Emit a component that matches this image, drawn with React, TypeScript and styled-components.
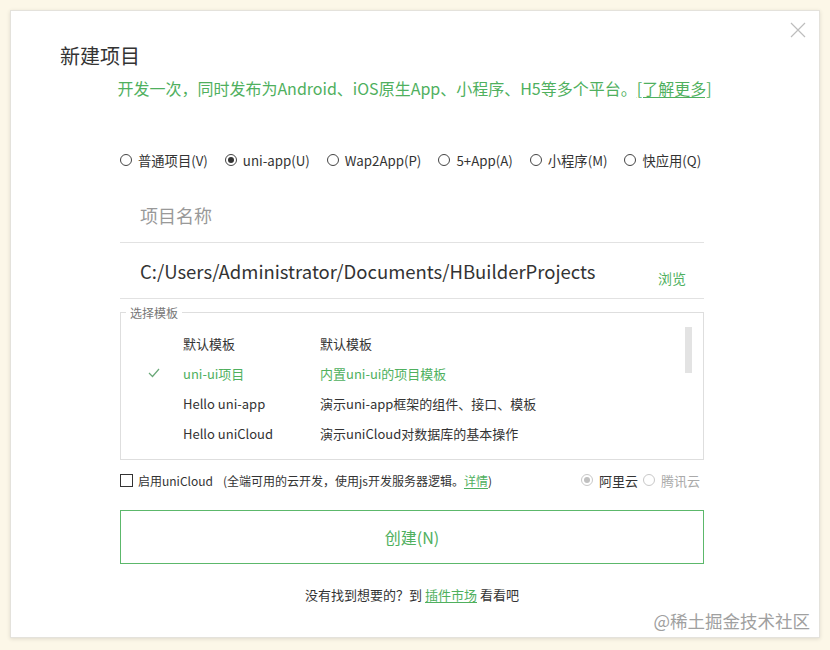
import React from 'react';
import styled, { createGlobalStyle } from 'styled-components';

const GlobalStyle = createGlobalStyle`
  html, body {
    margin: 0;
    padding: 0;
    background: #fcf7e8;
  }
  body {
    font-family: 'Noto Sans CJK SC', 'Noto Sans', sans-serif;
    color: #333;
  }
`;

const GREEN = '#4fb05e';

const Page = styled.div`
  width: 830px;
  height: 650px;
  padding: 10px;
  box-sizing: border-box;
`;

const Dialog = styled.div`
  position: relative;
  width: 810px;
  height: 628px;
  box-sizing: border-box;
  background: #fff;
  border: 1px solid #e4e2dc;
  box-shadow: 0 1px 4px rgba(0, 0, 0, 0.12);
  padding: 31px 115px 0 109px;
`;

const CloseButton = styled.button`
  position: absolute;
  top: 9px;
  right: 11px;
  width: 20px;
  height: 20px;
  padding: 0;
  border: none;
  background: none;
`;

const Title = styled.h1`
  margin: 0 0 0 -60px;
  font-size: 20px;
  line-height: 28px;
  font-weight: 400;
  color: #333;
`;

const Subtitle = styled.p`
  margin: 6px -33px 0 -28px;
  text-align: center;
  white-space: nowrap;
  font-size: 16px;
  line-height: 24px;
  color: ${GREEN};
`;

const Link = styled.a`
  color: ${GREEN};
  text-decoration: underline;
  text-underline-offset: 2px;
`;

const TypeRow = styled.div`
  display: flex;
  align-items: center;
  gap: 17px;
  margin-top: 48px;
  height: 24px;
  font-size: 13.3px;
`;

const Option = styled.label<{ $muted?: boolean }>`
  display: flex;
  align-items: center;
  gap: 6px;
  color: ${(p) => (p.$muted ? '#aaa' : '#333')};
  white-space: nowrap;
`;

const Radio = styled.span<{ $checked?: boolean; $disabled?: boolean }>`
  position: relative;
  width: 12px;
  height: 12px;
  box-sizing: border-box;
  border-radius: 50%;
  border: 1px solid ${(p) => (p.$disabled ? '#c8c8c8' : '#444')};
  &::after {
    content: '';
    display: ${(p) => (p.$checked ? 'block' : 'none')};
    position: absolute;
    left: 2px;
    top: 2px;
    width: 6px;
    height: 6px;
    border-radius: 50%;
    background: ${(p) => (p.$disabled ? '#c0c0c0' : '#333')};
  }
`;

const Field = styled.div`
  display: flex;
  align-items: center;
  justify-content: space-between;
  height: 56px;
  box-sizing: border-box;
  padding: 0 18px 0 20px;
  border-bottom: 1px solid #e2e2e2;
`;

const NameField = styled(Field)`
  margin-top: 15px;
`;

const FieldText = styled.span<{ $placeholder?: boolean }>`
  font-size: ${(p) => (p.$placeholder ? '18px' : '18.5px')};
  color: ${(p) => (p.$placeholder ? '#999' : '#333')};
`;

const Browse = styled.span`
  align-self: flex-end;
  margin-bottom: 10px;
  font-size: 14px;
  color: ${GREEN};
`;

const TemplateBox = styled.div`
  position: relative;
  margin-top: 13px;
  height: 148px;
  box-sizing: border-box;
  border: 1px solid #dedede;
  padding-top: 15px;
`;

const Legend = styled.span`
  position: absolute;
  top: -8px;
  left: 5px;
  padding: 0 4px;
  background: #fff;
  font-size: 12px;
  line-height: 16px;
  color: #777;
`;

const Scrollbar = styled.div`
  position: absolute;
  top: 14px;
  right: 11px;
  width: 7px;
  height: 46px;
  background: #e3e3e3;
`;

const TemplateRow = styled.div<{ $active?: boolean }>`
  display: grid;
  grid-template-columns: 62px 137px 1fr;
  align-items: center;
  height: 30px;
  font-size: 13px;
  color: ${(p) => (p.$active ? GREEN : '#333')};
`;

const Check = styled.span`
  display: flex;
  justify-content: center;
  padding-left: 4px;
`;

const CloudRow = styled.div`
  display: flex;
  align-items: center;
  margin-top: 10px;
  height: 20px;
  font-size: 12px;
`;

const Checkbox = styled.span`
  width: 13px;
  height: 13px;
  box-sizing: border-box;
  border: 1px solid #333;
  margin-right: 5px;
`;

const Note = styled.span`
  margin-left: 10px;
  color: #333;
`;

const Providers = styled.div`
  display: flex;
  align-items: center;
  gap: 5px;
  margin-left: auto;
  margin-right: 4px;
  font-size: 13px;
`;

const CreateButton = styled.button`
  display: block;
  width: 100%;
  height: 54px;
  margin-top: 20px;
  border: 1px solid #5cb86b;
  background: #fff;
  font-family: inherit;
  font-size: 16px;
  color: ${GREEN};
`;

const Footer = styled.p`
  margin: 21px 0 0;
  text-align: center;
  font-size: 13px;
  line-height: 20px;
  color: #333;
`;

const Watermark = styled.span`
  position: absolute;
  right: 9px;
  bottom: 4px;
  font-size: 17.5px;
  color: #a0a0a0;
`;

const types = [
  { label: '普通项目(V)' },
  { label: 'uni-app(U)', checked: true },
  { label: 'Wap2App(P)' },
  { label: '5+App(A)' },
  { label: '小程序(M)' },
  { label: '快应用(Q)' },
];

const templates = [
  { name: '默认模板', desc: '默认模板' },
  { name: 'uni-ui项目', desc: '内置uni-ui的项目模板', active: true },
  { name: 'Hello uni-app', desc: '演示uni-app框架的组件、接口、模板' },
  { name: 'Hello uniCloud', desc: '演示uniCloud对数据库的基本操作' },
];

export default function App() {
  return (
    <>
      <GlobalStyle />
      <Page>
        <Dialog>
          <CloseButton aria-label="关闭">
            <svg width="20" height="20" viewBox="0 0 20 20">
              <path d="M3 3 L17 17 M17 3 L3 17" stroke="#bdbdbd" strokeWidth="1.2" />
            </svg>
          </CloseButton>
          <Title>新建项目</Title>
          <Subtitle>
            开发一次，同时发布为Android、iOS原生App、小程序、H5等多个平台。<Link>[了解更多]</Link>
          </Subtitle>
          <TypeRow>
            {types.map((t) => (
              <Option key={t.label}>
                <Radio $checked={t.checked} />
                {t.label}
              </Option>
            ))}
          </TypeRow>
          <NameField>
            <FieldText $placeholder>项目名称</FieldText>
          </NameField>
          <Field>
            <FieldText>C:/Users/Administrator/Documents/HBuilderProjects</FieldText>
            <Browse>浏览</Browse>
          </Field>
          <TemplateBox>
            <Legend>选择模板</Legend>
            <Scrollbar />
            {templates.map((t) => (
              <TemplateRow key={t.name} $active={t.active}>
                <Check>
                  {t.active && (
                    <svg width="12" height="10" viewBox="0 0 12 10">
                      <path d="M1 5 L4.5 8.5 L11 1" fill="none" stroke="#6aa878" strokeWidth="1.2" />
                    </svg>
                  )}
                </Check>
                <span>{t.name}</span>
                <span>{t.desc}</span>
              </TemplateRow>
            ))}
          </TemplateBox>
          <CloudRow>
            <Checkbox />
            启用uniCloud
            <Note>
              (全端可用的云开发，使用js开发服务器逻辑。<Link>详情</Link>)
            </Note>
            <Providers>
              <Option>
                <Radio $checked $disabled />
                阿里云
              </Option>
              <Option $muted>
                <Radio $disabled />
                腾讯云
              </Option>
            </Providers>
          </CloudRow>
          <CreateButton>创建(N)</CreateButton>
          <Footer>
            没有找到想要的？到 <Link>插件市场</Link> 看看吧
          </Footer>
          <Watermark>@稀土掘金技术社区</Watermark>
        </Dialog>
      </Page>
    </>
  );
}
